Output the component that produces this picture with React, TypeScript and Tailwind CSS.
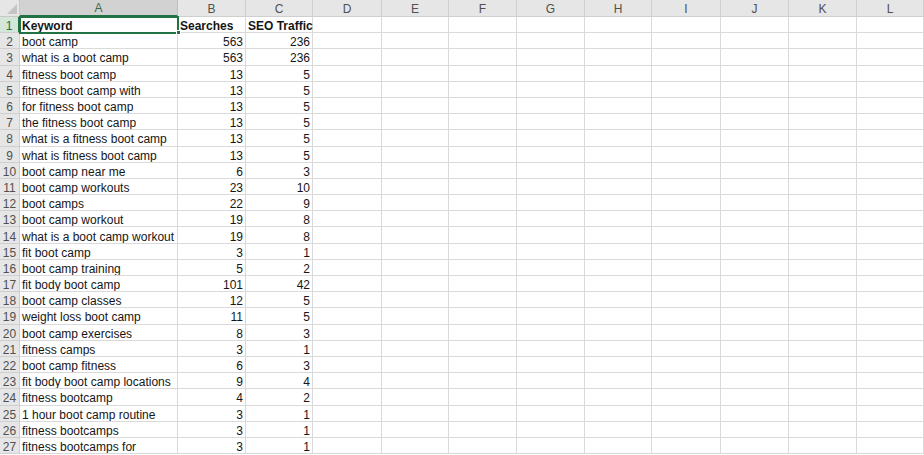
import React from "react";

const rows: [string, number | string, number | string][] = [
  ["Keyword", "Searches", "SEO Traffic"],
  ["boot camp", 563, 236],
  ["what is a boot camp", 563, 236],
  ["fitness boot camp", 13, 5],
  ["fitness boot camp with", 13, 5],
  ["for fitness boot camp", 13, 5],
  ["the fitness boot camp", 13, 5],
  ["what is a fitness boot camp", 13, 5],
  ["what is fitness boot camp", 13, 5],
  ["boot camp near me", 6, 3],
  ["boot camp workouts", 23, 10],
  ["boot camps", 22, 9],
  ["boot camp workout", 19, 8],
  ["what is a boot camp workout", 19, 8],
  ["fit boot camp", 3, 1],
  ["boot camp training", 5, 2],
  ["fit body boot camp", 101, 42],
  ["boot camp classes", 12, 5],
  ["weight loss boot camp", 11, 5],
  ["boot camp exercises", 8, 3],
  ["fitness camps", 3, 1],
  ["boot camp fitness", 6, 3],
  ["fit body boot camp locations", 9, 4],
  ["fitness bootcamp", 4, 2],
  ["1 hour boot camp routine", 3, 1],
  ["fitness bootcamps", 3, 1],
  ["fitness bootcamps for", 3, 1],
];

const cols = ["A", "B", "C", "D", "E", "F", "G", "H", "I", "J", "K", "L"];
const empty = ["D", "E", "F", "G", "H", "I", "J", "K", "L"];

export default function App() {
  return (
    <div
      className="w-[924px] h-[455px] overflow-hidden bg-white text-[#161616]"
      style={{ fontFamily: '"Liberation Sans", Arial, sans-serif' }}
    >
      <div className="grid grid-cols-[20px_158px_68px_67px_69px_67px_68px_68px_67px_69px_68px_68px_1fr] text-[12px] leading-none">
        {/* column headers */}
        <div className="relative h-[17px] bg-[#e6e6e6] border-r border-b border-[#c8c8c8]">
          <div className="absolute right-[2px] bottom-[2px] w-0 h-0 border-l-[10px] border-l-transparent border-b-[10px] border-b-[#c4c4c4]" />
        </div>
        {cols.map((c) => (
          <div
            key={c}
            className={
              c === "A"
                ? "h-[17px] flex items-center justify-center pt-[1px] bg-[#d2d2d2] text-[#3b6a4a] border-r border-[#c0c0c0] border-b-2 border-b-[#217346]"
                : "h-[17px] flex items-center justify-center pt-[1px] bg-[#e6e6e6] text-[#505050] border-r border-b border-[#cfcfcf]"
            }
          >
            {c}
          </div>
        ))}

        {rows.map((r, i) => {
          const first = i === 0;
          return (
            <React.Fragment key={i}>
              <div
                className={
                  first
                    ? "h-[16.2px] flex items-center justify-center pt-[3px] bg-[#d3e6d7] text-[#217346] border-r-2 border-r-[#217346] border-b border-b-[#cfcfcf]"
                    : "h-[16.2px] flex items-center justify-center pt-[3px] bg-[#e6e6e6] text-[#505050] border-r border-b border-[#cfcfcf]"
                }
              >
                {i + 1}
              </div>
              <div
                className={
                  first
                    ? "relative h-[16.2px] flex items-center pl-[2px] pt-[3px] font-bold outline-2 outline-[#217346] -outline-offset-1 border-b border-[#dadada]"
                    : "h-[16.2px] flex items-center pl-[2px] pt-[3px] border-r border-b border-[#dadada] whitespace-nowrap overflow-hidden"
                }
              >
                {r[0]}
                {first && (
                  <span className="absolute -right-[3px] -bottom-[3px] w-[5px] h-[5px] bg-[#217346] border border-white" />
                )}
              </div>
              <div
                className={
                  first
                    ? "h-[16.2px] flex items-center pl-[2px] pt-[3px] font-bold border-r border-b border-[#dadada]"
                    : "h-[16.2px] flex items-center justify-end pr-[2px] pt-[3px] border-r border-b border-[#dadada]"
                }
              >
                {r[1]}
              </div>
              <div
                className={
                  first
                    ? "h-[16.2px] flex items-center pl-[2px] pt-[3px] font-bold border-r border-b border-[#dadada] whitespace-nowrap"
                    : "h-[16.2px] flex items-center justify-end pr-[2px] pt-[3px] border-r border-b border-[#dadada]"
                }
              >
                {r[2]}
              </div>
              {empty.map((c) => (
                <div key={c} className="h-[16.2px] border-r border-b border-[#dadada]" />
              ))}
            </React.Fragment>
          );
        })}
      </div>
    </div>
  );
}
